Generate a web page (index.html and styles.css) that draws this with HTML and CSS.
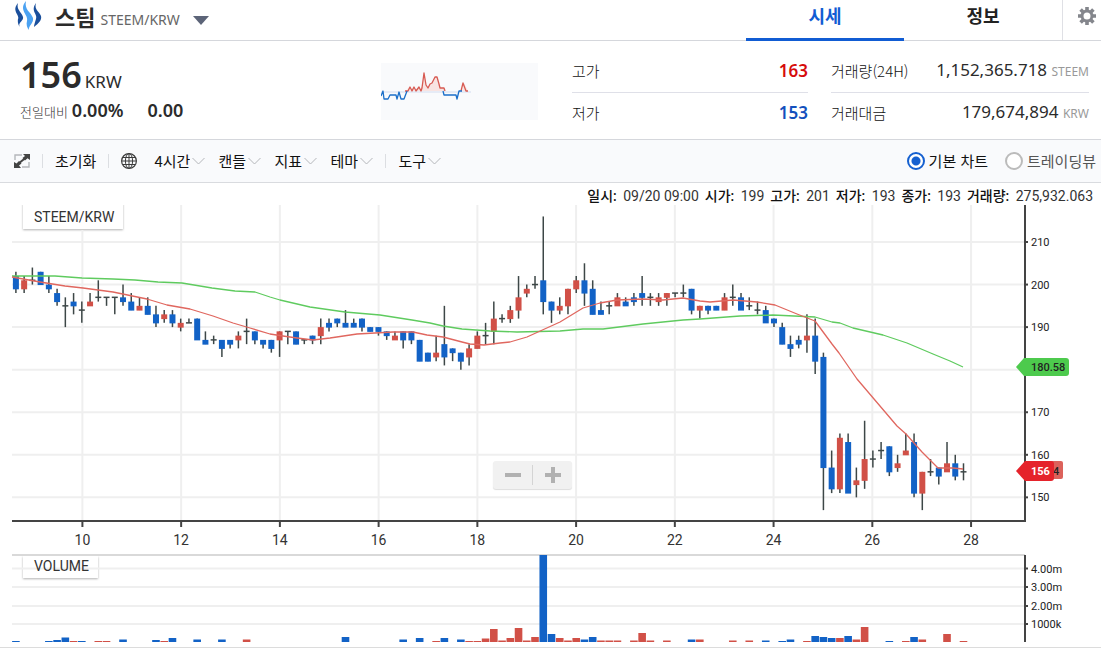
FILE: index.html
```html
<!DOCTYPE html>
<html lang="ko">
<head>
<meta charset="utf-8">
<meta name="viewport" content="width=device-width, initial-scale=1">
<title>스팀 STEEM/KRW</title>
<link rel="stylesheet" href="styles.css">
</head>
<body>
<header class="top">
  <button class="coin" type="button">
    <svg class="coin-logo" width="28" height="30" viewBox="0 0 28 30" aria-hidden="true">
      <path d="M4 2C-3 10 6 14 4 18C3.500 21 4 24 6 26C3 22 10 20 9 16C8 11 2 9 4 2Z" fill="#1a4f9c"/>
      <path d="M22 2C16 10 24 13 22 18C21 21 20 24 20 26C25 22 28 19 27 15C25 10 20 9 22 2Z" fill="#1a4f9c"/>
      <path d="M12 0C4 9 15 14 13 20C12 23 13 27 15 29C14 25 20 22 19 17C17 11 10 9 12 0Z" fill="#4ba2f2"/>
    </svg>
    <strong class="coin-name">스팀</strong>
    <span class="coin-pair">STEEM/KRW</span>
    <svg class="coin-arrow" width="16" height="9" viewBox="0 0 16 9" aria-hidden="true"><path d="M0 0H16L8 9Z" fill="#5c6478"/></svg>
  </button>
  <nav class="tabs">
    <a class="tab tab-on" href="#price">시세</a>
    <a class="tab" href="#info">정보</a>
  </nav>
  <button class="settings" type="button" aria-label="설정">
    <svg width="20" height="20" viewBox="0 0 20 20" aria-hidden="true">
      <g stroke="#84868c" stroke-width="3.6"><path d="M10 1V19M1 10H19M3.6 3.6L16.4 16.4M16.4 3.6L3.6 16.4"/></g>
      <circle cx="10" cy="10" r="5" fill="#fff" stroke="#84868c" stroke-width="3"/>
    </svg>
  </button>
</header>

<section class="stats">
  <div class="price">
    <div class="price-now"><strong>156</strong><span>KRW</span></div>
    <div class="price-diff"><span>전일대비</span><strong>0.00%</strong><strong class="diff-value">0.00</strong></div>
  </div>
  <svg class="spark" width="157" height="57" viewBox="0 0 157 57" aria-hidden="true">
    <path d="M0 28H90V30H0Z" fill="#e6ebf6"/>
    <path d="M25 28L28 24L30 28L32 24L34 28L38 24L40 27L43 10L45 22L47 25L49 21L51 20L54 14H56L58 22L60 25H63L64 28ZM81 28L83 20L87 28Z" fill="#f8e4e2"/>
    <g fill="none" stroke-width="1.3" stroke-linejoin="round">
      <path d="M24 28H27L29 24L31 28L33 24L35 28L38 24L40 28L41 25L43 10L45 22L47 25L49 21L51 20L54 14H56L58 21L59 25H63L64 28M80 28L82 20L85 28H87" stroke="#d75a52"/>
      <path d="M0 33L2 28L3 36H7L9 32H15L16 36L18 29L20 36H23L26 28M62 28L63 32H75L76 36L78 28H81" stroke="#1b6fc9"/>
    </g>
  </svg>
  <dl class="box box-range">
    <div class="row"><dt>고가</dt><dd class="high">163</dd></div>
    <div class="row"><dt>저가</dt><dd class="low">153</dd></div>
  </dl>
  <dl class="box box-volume">
    <div class="row"><dt>거래량(24H)</dt><dd>1,152,365.718 <small>STEEM</small></dd></div>
    <div class="row"><dt>거래대금</dt><dd>179,674,894 <small>KRW</small></dd></div>
  </dl>
</section>

<div class="toolbar">
  <button class="tool icon-tool" type="button" aria-label="전체화면">
    <svg width="16" height="14" viewBox="0 0 16 14" aria-hidden="true">
      <path d="M1 6V1H8M15 8V13H8" fill="none" stroke="#b5b7bb" stroke-width="1.4"/>
      <path d="M9 0H16V6L13.500 4.200L11 6.500L8.500 4L11 2ZM0 8L2.500 9.600L5 7L7.500 9.500L5 11.500L7 14H0Z" fill="#444"/>
      <path d="M4 10L12 3.500" stroke="#444" stroke-width="2"/>
    </svg>
  </button>
  <i class="sep"></i>
  <button class="tool" type="button">초기화</button>
  <i class="sep"></i>
  <button class="tool icon-tool" type="button" aria-label="시간대">
    <svg width="16" height="18" viewBox="0 0 16 18" fill="none" stroke="#3c3c3c" aria-hidden="true">
      <circle cx="8" cy="9" r="7.400" stroke-width="1.200"/><ellipse cx="8" cy="9" rx="3.600" ry="7.400"/><path d="M8 2V16M1 9H15M2 5.500H14M2 12.500H14"/>
    </svg>
  </button>
  <div class="menus">
    <label class="pick"><select aria-label="시간 간격"><option>4시간</option></select><svg width="13" height="8" viewBox="0 0 13 8"><path d="M0.500 1L6.500 7L12.500 1"/></svg></label>
    <label class="pick"><select aria-label="차트 종류"><option>캔들</option></select><svg width="13" height="8" viewBox="0 0 13 8"><path d="M0.500 1L6.500 7L12.500 1"/></svg></label>
    <label class="pick"><select aria-label="지표"><option>지표</option></select><svg width="13" height="8" viewBox="0 0 13 8"><path d="M0.500 1L6.500 7L12.500 1"/></svg></label>
    <label class="pick"><select aria-label="테마"><option>테마</option></select><svg width="13" height="8" viewBox="0 0 13 8"><path d="M0.500 1L6.500 7L12.500 1"/></svg></label>
  </div>
  <i class="sep"></i>
  <label class="pick"><select aria-label="도구"><option>도구</option></select><svg width="13" height="8" viewBox="0 0 13 8"><path d="M0.500 1L6.500 7L12.500 1"/></svg></label>
  <div class="modes">
    <label class="mode"><input type="radio" name="mode" checked><span>기본 차트</span></label>
    <label class="mode"><input type="radio" name="mode"><span>트레이딩뷰</span></label>
  </div>
</div>

<main class="chart">
  <div class="legend">
    <span><b>일시:</b> 09/20 09:00</span>
    <span><b>시가:</b> 199</span>
    <span><b>고가:</b> 201</span>
    <span><b>저가:</b> 193</span>
    <span><b>종가:</b> 193</span>
    <span><b>거래량:</b> 275,932.063</span>
  </div>
  <div class="plot">
    <svg id="plot" class="plot-svg" viewBox="0 205 1101 442" role="img" aria-label="STEEM/KRW 캔들 차트"></svg>
    <div class="zoom">
      <button type="button" aria-label="축소"><svg width="16" height="16" viewBox="0 0 16 16"><path d="M0 8H16"/></svg></button>
      <button type="button" aria-label="확대"><svg width="16" height="16" viewBox="0 0 16 16"><path d="M0 8H16M8 0V16"/></svg></button>
    </div>
  </div>
</main>
<script src="chart.js"></script>
</body>
</html>
```

FILE: styles.css
```css
* { box-sizing: border-box; }

body {
  margin: 0;
  background: #fff;
  color: #2b2b2b;
  font-family: "Noto Sans", "Noto Sans CJK KR", sans-serif;
}

button, select {
  margin: 0;
  padding: 0;
  border: 0;
  background: none;
  color: inherit;
  font: inherit;
  cursor: pointer;
}

.top {
  display: flex;
  height: 41px;
  border-bottom: 1px solid #d5d7dc;
}

.coin {
  display: flex;
  align-items: center;
  padding-left: 14px;
  padding-bottom: 8px;
}

.coin-name {
  margin-left: 13px;
  font: 700 22px/30px "Noto Sans CJK KR", sans-serif;
}

.coin-pair {
  margin-left: 5px;
  padding-top: 8px;
  color: #666;
  font-size: 14px;
  line-height: 20px;
}

.coin-arrow { margin: 8px 0 0 13px; }

.tabs {
  display: flex;
  width: 316px;
  margin-left: auto;
}

.tab {
  flex: 1;
  height: 41px;
  color: #222;
  font: 700 18px/30px "Noto Sans CJK KR", sans-serif;
  text-align: center;
  text-decoration: none;
}

.tab-on {
  border-bottom: 3px solid #115cd3;
  color: #115cd3;
}

.settings {
  width: 39px;
  padding: 0 0 8px 14px;
  border-left: 1px solid #dfe0e5;
}

.settings svg { display: block; }

.stats {
  display: flex;
  height: 99px;
  border-bottom: 1px solid #d5d7dc;
}

.price {
  flex: 1;
  padding: 9px 0 0 20px;
}

.price-now {
  display: flex;
  align-items: baseline;
  gap: 3px;
  font-size: 17px;
  line-height: 50px;
}

.price-now strong { font-size: 36px; font-weight: 600; }

.price-diff {
  display: flex;
  align-items: baseline;
  gap: 4px;
  margin-top: -8px;
  color: #333;
  font: 300 13px/22px "Noto Sans CJK KR", sans-serif;
}

.price-diff strong {
  color: #2b2b2b;
  font: 600 18px/22px "Noto Sans", sans-serif;
}

.price-diff .diff-value { margin-left: 20px; }

.spark {
  margin: 22px 34px 0 0;
  background: #f9fafc;
}

.box {
  margin: 9px 0 0;
  font-size: 17px;
  line-height: 20px;
}

.box-range { width: 236px; }

.box-volume {
  width: 258px;
  margin-left: 23px;
  margin-right: 12px;
}

.row {
  display: flex;
  align-items: center;
  justify-content: space-between;
  height: 40px;
}

.row:first-child {
  height: 43px;
  padding-bottom: 1px;
  border-bottom: 1px solid #dfe0e8;
}

.row dt { color: #111; font: 300 15px/20px "Noto Sans CJK KR", sans-serif; }
.row dd { margin: 0; }
.row small { color: #999; font-size: 12px; }
.row .high { color: #d60c0c; font-weight: 600; }
.row .low { color: #1350bd; font-weight: 600; }

.toolbar {
  display: flex;
  align-items: center;
  height: 43px;
  padding: 0 5px 0 14px;
  border-bottom: 1px solid #d9dbdf;
  background: #f9fafc;
  color: #111;
  font: 400 15px/20px "Noto Sans CJK KR", sans-serif;
}

.icon-tool svg { display: block; }

.sep {
  width: 1px;
  height: 14px;
  margin: 0 12px;
  background: #dcdee2;
}

.menus { display: flex; gap: 13px; margin-left: 17px; }
.pick { display: flex; align-items: center; gap: 2px; }
.pick select { appearance: none; }
.pick svg { fill: none; stroke: #b4b6ba; }

.modes { display: flex; gap: 17px; margin-left: auto; }

.mode {
  display: flex;
  align-items: center;
  gap: 4px;
}

.mode + .mode { color: #555; }

.mode input {
  appearance: none;
  width: 18px;
  height: 18px;
  margin: 0;
  border: 2px solid #bbb;
  border-radius: 50%;
  background: #fff;
}

.mode input:checked {
  border-color: #1560d0;
  background: radial-gradient(circle, #1560d0 4px, #fff 5px);
}

.legend {
  display: flex;
  justify-content: flex-end;
  gap: 6px;
  height: 22px;
  padding-right: 8px;
  color: #333;
  font: 400 14px/27px Roboto, "Noto Sans CJK KR", sans-serif;
  white-space: nowrap;
}

.legend b {
  margin-right: 3px;
  color: #111;
  font: 500 14px/27px Roboto, "Noto Sans CJK KR", sans-serif;
}

.plot {
  position: relative;
  border-bottom: 1px solid #dcdcdc;
}

.plot-svg {
  display: block;
  width: 100%;
  height: auto;
}

.grid { stroke: #efefef; stroke-width: 2; }
.edge { stroke: #d9d9d9; stroke-width: 2; }
.axis { fill: none; stroke: #444; stroke-width: 2; }
.wick { stroke: #3d4747; stroke-width: 1.5; }
.up { fill: #d15047; }
.down { fill: #1262c6; }
.line { fill: none; stroke-width: 1.3; stroke-linejoin: round; }
.line-short { stroke: #e0675f; }
.line-long { stroke: #5fcb5f; }
.date { fill: #333; font: 400 14px Roboto, sans-serif; text-anchor: middle; }
.value { fill: #222; font: 400 11px Roboto, sans-serif; }
.flag { fill: #222; font: 500 11px Roboto, sans-serif; }
.flag-now { fill: #fff; font-weight: 700; }
.name { fill: #333; font: 400 14px Roboto, sans-serif; }

.panel {
  fill: #fff;
  filter: drop-shadow(0 1px 1px rgba(0, 0, 0, 0.3));
}

.zoom {
  position: absolute;
  top: 58%;
  left: 493px;
  display: flex;
  width: 79px;
  height: 28px;
  padding: 4px 0;
  border-radius: 3px;
  background: #f1f1f1;
  box-shadow: 0 1px 1px #ddd;
}

.zoom button {
  flex: 1;
  display: flex;
  align-items: center;
  justify-content: center;
}

.zoom button + button { border-left: 1px solid #d4d4d4; }
.zoom path { stroke: #b1b1b1; stroke-width: 4; }
```

FILE: chart.js
```javascript
// Each candle: [open, close, high, low]
const candles = [
  [202,199,203,198],[199,201,202,198],[201,201,204,200],[203,200,203,200],[200,199,202,198],[198,196,199,195],
  [195,195,197,190],[196,195,198,193],[194,194,196,191],[195,196,198,195],[197,197,201,196],[197,197,197,195],
  [197,197,197,193],[197,196,200,195],[196,194,198,194],[194,195,197,194],[195,193,197,193],[193,191,195,190],
  [192,193,194,191],[193,191,194,190],[190,191,192,189],[191,191,192,191],[192,187,192,187],[187,186,189,186],
  [187,187,188,186],[187,185,187,183],[187,186,187,185],[187,188,189,185],[189,189,192,186],[189,187,189,186],
  [187,186,187,185],[187,185,187,184],[187,189,189,183],[189,189,189,186],[189,186,189,186],[187,187,187,186],
  [188,187,188,186],[188,190,192,186],[191,190,192,189],[192,191,192,190],[191,190,194,190],[191,190,192,190],
  [192,190,192,189],[190,189,190,189],[190,189,190,188],[189,188,189,187],[187,188,189,187],[189,187,189,185],
  [189,187,189,186],[187,182,187,182],[184,182,184,182],[183,184,188,182],[186,183,195,181],[185,184,185,182],
  [184,182,184,180],[183,185,186,181],[185,188,189,185],[188,188,191,186],[189,192,196,186],[192,192,193,191],
  [192,194,195,191],[194,197,202,192],[198,199,200,197],[200,200,202,199],[201,196,216,193],[196,194,196,191],
  [194,195,197,193],[195,199,199,193],[199,201,202,198],[201,198,205,195],[199,193,201,193],[194,193,196,193],
  [195,195,196,193],[195,197,198,195],[196,195,197,195],[197,196,198,195],[198,197,202,195],[197,197,198,195],
  [196,197,198,195],[197,198,198,195],[198,198,198,197],[198,198,200,197],[199,194,199,193],[194,195,195,192],
  [195,194,195,193],[195,194,195,194],[194,197,198,194],[197,197,200,195],[197,194,198,194],[195,195,197,194],
  [194,194,196,193],[194,191,195,191],[192,191,192,190],[190,186,191,186],[186,185,188,183],[187,186,188,185],
  [187,188,193,184],[188,182,192,179],[183,157,184,147],[157,152,161,151],[152,164,165,151],[163,151,165,151],
  [153,154,157,150],[154,159,168,152],[159,159,161,157],[161,161,163,159],[162,156,162,155],[157,158,160,156],
  [160,161,165,160],[163,151,165,150],[151,156,156,147],[156,156,159,155],[157,155,157,153],[156,158,163,156],
  [158,155,160,154],[156,156,158,154]
];

// Volume bars: [candle index, bar height]
const fallingVolume = [[0,1],[4,1],[5,2],[6,4.5],[8,1],[13,2.5],[17,2],[19,4],[22,2.5],[25,2.5],[40,5],[47,2.5],[49,4],[52,4],[54,2.5],[64,87],[65,8],[69,2.5],[70,5],[82,2.5],[91,1.5],[93,1],[94,2.5],[97,6],[98,5],[99,4],[101,6],[106,1],[109,5]];
const risingVolume = [[7,1],[10,1],[11,1],[18,1],[28,2.5],[51,1],[55,1],[56,1],[57,3.5],[58,13],[59,1.5],[60,4],[61,14],[62,1.5],[63,5],[66,4],[67,1.5],[68,4],[71,1.5],[72,1.5],[73,1.5],[75,1.5],[76,9],[77,1.5],[79,1.5],[83,2.5],[87,1.5],[89,1.5],[96,1],[100,4],[102,2.5],[103,15],[108,1],[110,2.5],[113,8],[115,1]];

const longAverage = "12,276 40,276 55,276 82,278 113,279 135,280 158,282 182,283 212,288 235,291 255,292 270,297 280,300 310,307 345,312 380,315 412,320 430,323 443,326 462,329 490,331 517,332 560,331 583,329 603,329 643,324 683,320 700,319 740,316 773,315 815,317 832,322 840,323 853,328 883,335 907,343 933,354 950,361 963,367";
const shortAverage = "12,277 40,282 65,286 83,288 113,292 147,299 167,305 190,309 213,316 233,323 250,328 270,334 283,336 297,338 313,340 330,338 357,334 375,333 393,332 413,332 427,335 443,337 462,342 470,344 484,345 500,343 510,342 527,337 560,322 583,308 600,303 617,300 643,299 663,300 683,298 700,301 710,302 733,300 757,302 775,305 797,314 815,321 832,344 839,353 857,379 897,426 906,434 922,452 938,468 953,468 963,469";

const x = i => 15.9 + i * 8.24;
const y = p => 242 + (210 - p) * 4.256;
const base = 642;
const out = [];
const line = (cls, x1, y1, x2, y2) => out.push(`<line class="${cls}" x1="${x1}" y1="${y1}" x2="${x2}" y2="${y2}"/>`);
const rect = (cls, left, top, w, h) => out.push(`<rect class="${cls}" x="${left}" y="${top}" width="${w}" height="${h}"/>`);
const text = (cls, left, top, s) => out.push(`<text class="${cls}" x="${left}" y="${top}">${s}</text>`);

const days = [10, 12, 14, 16, 18, 20, 22, 24, 26, 28];
const dayX = d => 82.4 + (d - 10) * 49.37;
const volumes = [[568.5, "4.00m"], [587, "3.00m"], [606, "2.00m"], [624, "1000k"]];

rect("panel", 23, 203, 100, 26);
rect("panel", 23, 556, 75, 22);

for (let p = 150; p <= 210; p += 10) line("grid", 12, y(p), 1025, y(p));
days.forEach(d => line("grid", dayX(d), d === 10 ? 230 : 205, dayX(d), 521));
volumes.forEach(([top]) => line("grid", 12, top, 1025, top));
line("edge", 12, 555, 1025, 555);

candles.forEach(([open, close, high, low], i) => {
  line("wick", x(i), y(high), x(i), y(low));
  if (open === close) line("wick", x(i) - 3, y(open), x(i) + 3, y(open));
  else rect(close > open ? "up" : "down", x(i) - 3, y(Math.max(open, close)), 6, Math.abs(open - close) * 4.256 + 0.5);
});
fallingVolume.forEach(([i, h]) => rect("down", x(i) - 3.8, base - h, 7.6, h));
risingVolume.forEach(([i, h]) => rect("up", x(i) - 3.8, base - h, 7.6, h));

out.push(`<polyline class="line line-long" points="${longAverage}"/>`);
out.push(`<polyline class="line line-short" points="${shortAverage}"/>`);

out.push('<path class="axis" d="M12 521H1025V205M1025 555V642"/>');
days.forEach(d => {
  line("axis", dayX(d), 521, dayX(d), 527);
  text("date", dayX(d), 545, d);
});
[150, 160, 170, 190, 200, 210].forEach(p => {
  line("axis", 1025, y(p), 1028, y(p));
  text("value", 1031, y(p) + 4, p);
});
volumes.forEach(([top, label]) => {
  line("axis", 1025, top, 1028, top);
  text("value", 1031, top + 4, label);
});

out.push('<path d="M1016 367L1024 358H1066Q1069 358 1069 361V373Q1069 376 1066 376H1024Z" fill="#4dca4d"/>');
text("flag", 1031, 371, "180.58");
out.push('<rect x="1040" y="461" width="23" height="18" rx="2" fill="#dc625b"/>');
text("flag", 1053, 475, "4");
out.push('<path d="M1016 471L1025 461H1051Q1054 461 1054 464V478Q1054 481 1051 481H1025Z" fill="#e5232b"/>');
text("flag flag-now", 1031, 475, "156");

text("name", 34, 222, "STEEM/KRW");
text("name", 34, 571, "VOLUME");

document.getElementById("plot").innerHTML = out.join("");
```
